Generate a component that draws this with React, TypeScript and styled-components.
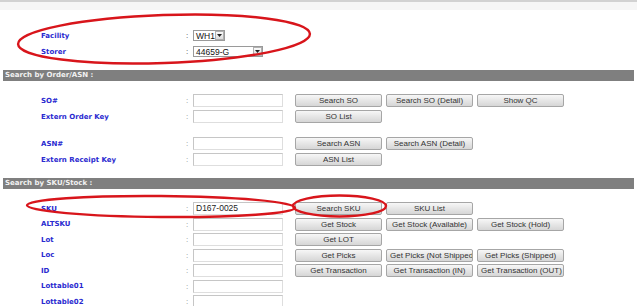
import React from "react";
import styled, { createGlobalStyle } from "styled-components";

const Global = createGlobalStyle`
  html, body { margin: 0; padding: 0; background: #fff; }
  body { width: 637px; height: 306px; overflow: hidden; }
  * { box-sizing: border-box; }
`;

const Page = styled.div`
  position: relative;
  width: 637px;
  height: 306px;
  overflow: hidden;
  background: #fff;
`;

const TopBand = styled.div`
  height: 10px;
  border-top: 2px solid #d2d2d2;
  background: #f6f6f6;
`;

const FilterBlock = styled.div`
  display: flex;
  flex-direction: column;
  gap: 5px;
  padding: 20px 0 0 41px;
  height: 60px;
`;

const SectionHeader = styled.div`
  margin: 0 3px;
  height: 11px;
  background: #7f7f7f;
  color: #f2f2f2;
  font-family: "DejaVu Sans", Verdana, sans-serif;
  font-weight: bold;
  font-size: 7px;
  line-height: 11px;
  padding-left: 2px;
  white-space: nowrap;
`;

const Section = styled.div<{ $top: number; $bottom: number; $gap: number }>`
  display: flex;
  flex-direction: column;
  gap: ${(p) => p.$gap}px;
  padding: ${(p) => p.$top}px 0 ${(p) => p.$bottom}px 41px;
`;

const Row = styled.div<{ $h?: number; $space?: number }>`
  display: grid;
  grid-template-columns: 145px 7px 90px 12px auto;
  align-items: center;
  height: ${(p) => p.$h ?? 13}px;
  margin-top: ${(p) => p.$space ?? 0}px;
`;

const Label = styled.span`
  font-family: "DejaVu Sans", Verdana, sans-serif;
  font-weight: bold;
  font-size: 7px;
  color: #2a2ad0;
  white-space: nowrap;
`;

const Colon = styled.span<{ $dark?: boolean }>`
  font-family: "Liberation Sans", Arial, sans-serif;
  font-size: 8px;
  color: ${(p) => (p.$dark ? "#444" : "#8a8a8a")};
`;

const TextBox = styled.div`
  width: 90px;
  height: 13px;
  border: 1px solid #c6c6c6;
  border-right-color: #dedede;
  border-bottom-color: #dedede;
  background: #fff;
  font-family: "Liberation Sans", Arial, sans-serif;
  font-size: 8.5px;
  line-height: 11px;
  color: #222;
  padding-left: 2px;
`;

const Select = styled.div<{ $w: number }>`
  width: ${(p) => p.$w}px;
  height: 11px;
  border: 1px solid #9a9a9a;
  background: #fff;
  display: flex;
  align-items: center;
  justify-content: space-between;
  font-family: "Liberation Sans", Arial, sans-serif;
  font-size: 8.5px;
  color: #111;
  padding-left: 2px;
`;

const Arrow = styled.span`
  width: 9px;
  height: 9px;
  border: 1px solid #b0b0b0;
  background: linear-gradient(#fafafa, #dcdcdc);
  display: flex;
  align-items: center;
  justify-content: center;
  margin-right: 0;
`;

const Buttons = styled.div`
  display: flex;
  gap: 4px;
`;

const Btn = styled.div`
  width: 87px;
  height: 13px;
  border: 1px solid #a6a6a6;
  border-radius: 2px;
  background: linear-gradient(#f7f7f7, #e6e6e6 50%, #d6d6d6);
  font-family: "Liberation Sans", Arial, sans-serif;
  font-size: 8px;
  color: #333;
  line-height: 11px;
  text-align: center;
  white-space: nowrap;
  overflow: hidden;
  padding: 0 3px;
`;

const Marks = styled.svg`
  position: absolute;
  left: 0;
  top: 0;
  pointer-events: none;
`;

const DropArrow = () => (
  <svg width="5" height="3" viewBox="0 0 5 3">
    <path d="M0 0H5L2.5 3Z" fill="#222" />
  </svg>
);

type FieldRow = {
  label: string;
  value?: string;
  buttons: string[];
  space?: number;
};

const orderRows: FieldRow[] = [
  { label: "SO#", buttons: ["Search SO", "Search SO (Detail)", "Show QC"] },
  { label: "Extern Order Key", buttons: ["SO List"] },
  { label: "ASN#", buttons: ["Search ASN", "Search ASN (Detail)"], space: 11 },
  { label: "Extern Receipt Key", buttons: ["ASN List"] },
];

const skuRows: FieldRow[] = [
  { label: "SKU", value: "D167-0025", buttons: ["Search SKU", "SKU List"] },
  { label: "ALTSKU", buttons: ["Get Stock", "Get Stock (Available)", "Get Stock (Hold)"] },
  { label: "Lot", buttons: ["Get LOT"] },
  { label: "Loc", buttons: ["Get Picks", "Get Picks (Not Shipped)", "Get Picks (Shipped)"] },
  { label: "ID", buttons: ["Get Transaction", "Get Transaction (IN)", "Get Transaction (OUT)"] },
  { label: "Lottable01", buttons: [] },
  { label: "Lottable02", buttons: [] },
];

const renderRow = (r: FieldRow) => (
  <Row key={r.label} $space={r.space}>
    <Label>{r.label}</Label>
    <Colon>:</Colon>
    <TextBox>{r.value}</TextBox>
    <span />
    <Buttons>
      {r.buttons.map((b) => (
        <Btn key={b}>{b}</Btn>
      ))}
    </Buttons>
  </Row>
);

export default function App() {
  return (
    <Page>
      <Global />
      <TopBand />
      <FilterBlock>
        <Row $h={11}>
          <Label>Facility</Label>
          <Colon $dark>:</Colon>
          <Select $w={32}>
            WH1
            <Arrow>
              <DropArrow />
            </Arrow>
          </Select>
        </Row>
        <Row $h={11}>
          <Label>Storer</Label>
          <Colon $dark>:</Colon>
          <Select $w={70}>
            44659-G
            <Arrow>
              <DropArrow />
            </Arrow>
          </Select>
        </Row>
      </FilterBlock>
      <SectionHeader>Search by Order/ASN :</SectionHeader>
      <Section $top={13} $bottom={12} $gap={3}>
        {orderRows.map(renderRow)}
      </Section>
      <SectionHeader>Search by SKU/Stock :</SectionHeader>
      <Section $top={13} $bottom={0} $gap={2.5}>
        {skuRows.map(renderRow)}
      </Section>
      <Marks width="637" height="306" viewBox="0 0 637 306">
        <g fill="none" stroke="#d8151b" strokeWidth="2.4">
          <ellipse cx="164" cy="39" rx="146" ry="24" transform="rotate(-2 164 39)" />
          <ellipse cx="161" cy="206.5" rx="134" ry="10.5" transform="rotate(0.5 161 206.5)" />
          <ellipse cx="339.5" cy="206" rx="46.5" ry="10.5" />
        </g>
      </Marks>
    </Page>
  );
}
